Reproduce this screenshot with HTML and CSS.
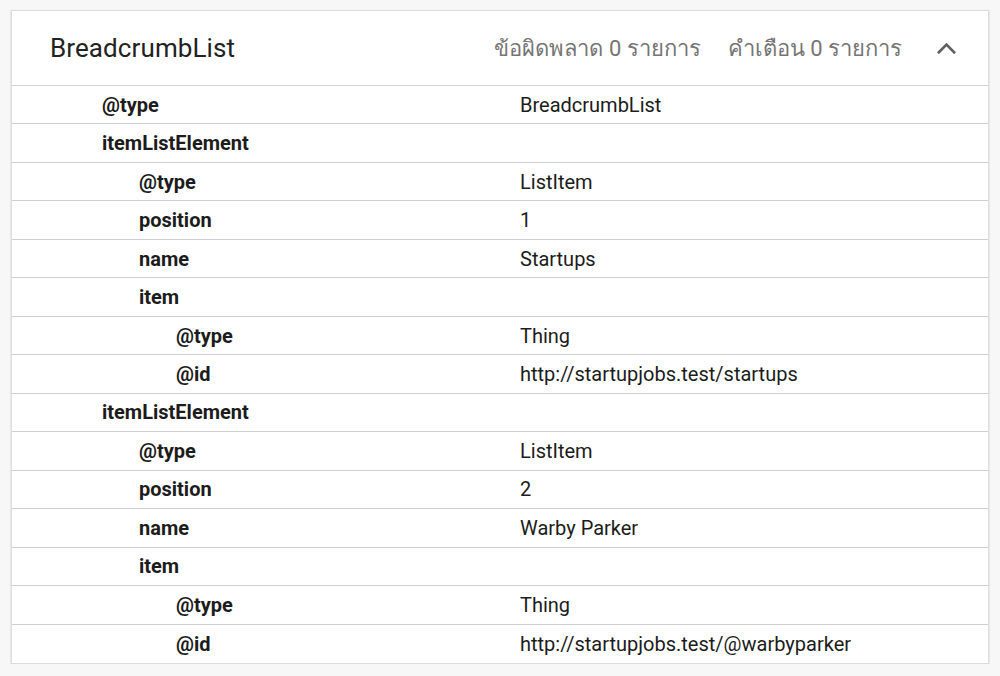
FILE: index.html
```html
<!DOCTYPE html>
<html lang="th">
<head>
<meta charset="utf-8">
<title>BreadcrumbList</title>
<link rel="stylesheet" href="styles.css">
</head>
<body>
<section class="card">
  <header class="card-head">
    <h2 class="title">BreadcrumbList</h2>
    <div class="status">
      <span class="count">ข้อผิดพลาด 0 รายการ</span>
      <span class="count">คำเตือน 0 รายการ</span>
      <svg class="chev" viewBox="0 0 20 12" width="20" height="12" aria-hidden="true">
        <polyline points="2,10.5 10,2.5 18,10.5" fill="none" stroke="#616161" stroke-width="2.8" stroke-linecap="square"/>
      </svg>
    </div>
  </header>
  <div class="rows">
    <div class="row"><div class="key l0">@type</div><div class="val">BreadcrumbList</div></div>
    <div class="row"><div class="key l0">itemListElement</div><div class="val"></div></div>
    <div class="row"><div class="key l1">@type</div><div class="val">ListItem</div></div>
    <div class="row"><div class="key l1">position</div><div class="val">1</div></div>
    <div class="row"><div class="key l1">name</div><div class="val">Startups</div></div>
    <div class="row"><div class="key l1">item</div><div class="val"></div></div>
    <div class="row"><div class="key l2">@type</div><div class="val">Thing</div></div>
    <div class="row"><div class="key l2">@id</div><div class="val">http://startupjobs.test/startups</div></div>
    <div class="row"><div class="key l0">itemListElement</div><div class="val"></div></div>
    <div class="row"><div class="key l1">@type</div><div class="val">ListItem</div></div>
    <div class="row"><div class="key l1">position</div><div class="val">2</div></div>
    <div class="row"><div class="key l1">name</div><div class="val">Warby Parker</div></div>
    <div class="row"><div class="key l1">item</div><div class="val"></div></div>
    <div class="row"><div class="key l2">@type</div><div class="val">Thing</div></div>
    <div class="row last"><div class="key l2">@id</div><div class="val">http://startupjobs.test/@warbyparker</div></div>
  </div>
</section>
</body>
</html>
```
FILE: styles.css
```css
html, body {
  margin: 0;
  padding: 0;
}
body {
  background: #f7f7f7;
  font-family: Roboto, "Noto Sans", "DejaVu Sans", sans-serif;
  color: #202020;
  padding: 10px 11px 0 11px;
}
.card {
  background: #fff;
  border: 1px solid #dcdcdc;
  box-shadow: 0 1px 2px rgba(0, 0, 0, 0.18);
  width: 976px;
}
.card-head {
  height: 75px;
  box-sizing: border-box;
  border-bottom: 1px solid #d4d4d4;
  display: flex;
  align-items: center;
  justify-content: space-between;
  padding: 0 32px 0 38px;
}
.title {
  margin: 0;
  font-weight: 400;
  font-size: 26px;
  color: #222;
  letter-spacing: 0.1px;
}
.status {
  display: flex;
  align-items: center;
  gap: 27px;
}
.count {
  font-size: 22px;
  color: #757575;
}
.chev {
  display: block;
  margin-left: 8px;
  width: 19px;
  height: 12px;
}
.rows {
  display: flex;
  flex-direction: column;
}
.row {
  display: grid;
  grid-template-columns: 508px 1fr;
  align-items: center;
  height: 38.47px;
  box-sizing: border-box;
  border-bottom: 1px solid #cfcfcf;
  font-size: 20px;
}
.row.last {
  border-bottom: none;
  height: 38px;
}
.key {
  font-weight: 700;
  color: #1c1c1c;
}
.l0 { padding-left: 90px; }
.l1 { padding-left: 127px; }
.l2 { padding-left: 164px; }
.val {
  color: #1c1c1c;
}
```
